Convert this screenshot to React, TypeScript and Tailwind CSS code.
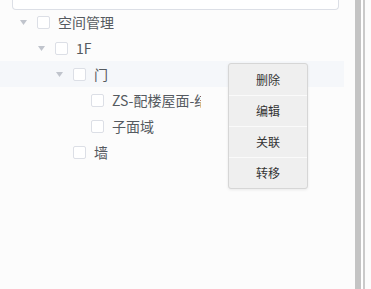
import React from 'react'

type Node = {
  label: string
  level: number
  expandable: boolean
  active?: boolean
}

const nodes: Node[] = [
  { label: '空间管理', level: 0, expandable: true },
  { label: '1F', level: 1, expandable: true },
  { label: '门', level: 2, expandable: true, active: true },
  { label: 'ZS-配楼屋面-结构', level: 3, expandable: false },
  { label: '子面域', level: 3, expandable: false },
  { label: '墙', level: 2, expandable: false },
]

const menuItems = ['删除', '编辑', '关联', '转移']

function Caret() {
  return (
    <svg width="7" height="5" viewBox="0 0 7 5">
      <path d="M0 0h7L3.5 5z" fill="#c0c4cc" />
    </svg>
  )
}

function TreeRow({ node }: { node: Node }) {
  return (
    <div
      className={`flex h-[26px] items-center ${node.active ? 'bg-[#f5f7fa]' : ''}`}
      style={{ paddingLeft: 14 + node.level * 18 }}
    >
      <span className="flex w-[18px] items-center justify-center">
        {node.expandable && <Caret />}
      </span>
      <span className="ml-[5px] h-[13px] w-[13px] shrink-0 rounded-[2px] border border-[#dcdfe6] bg-white" />
      <span className="ml-[8px] max-w-[89px] overflow-hidden whitespace-nowrap text-[14px] leading-[26px] text-[#555a60]">
        {node.label}
      </span>
    </div>
  )
}

export default function App() {
  return (
    <div
      className="relative flex h-[289px] w-[371px] overflow-hidden bg-[#fcfcfc]"
      style={{ fontFamily: '"Noto Sans CJK SC", "Noto Sans", sans-serif' }}
    >
      <div className="w-[355px] shrink-0">
        <div className="ml-[12px] h-[10px] w-[327px] rounded-b-[4px] border border-t-0 border-[#dcdfe6] bg-white" />
        <div className="-mt-[1px] w-[344px]">
          {nodes.map(n => (
            <TreeRow key={n.label} node={n} />
          ))}
        </div>
      </div>

      {/* scrollbar */}
      <div className="flex h-full">
        <div className="w-[6px] bg-[#c4c4c4]" />
        <div className="w-[2px] bg-white" />
        <div className="w-[2px] bg-[#cacaca]" />
      </div>

      {/* context menu */}
      <div className="absolute left-[228px] top-[63px] w-[80px] overflow-hidden rounded-[3px] border border-[#d6d6d6] bg-[#efefef] shadow-[0_1px_3px_rgba(0,0,0,0.08)]">
        {menuItems.map((m, i) => (
          <div
            key={m}
            className={`flex h-[31px] items-center justify-center text-[12px] text-[#333] ${i > 0 ? 'border-t border-[#fafafa]' : ''}`}
          >
            {m}
          </div>
        ))}
      </div>
    </div>
  )
}
